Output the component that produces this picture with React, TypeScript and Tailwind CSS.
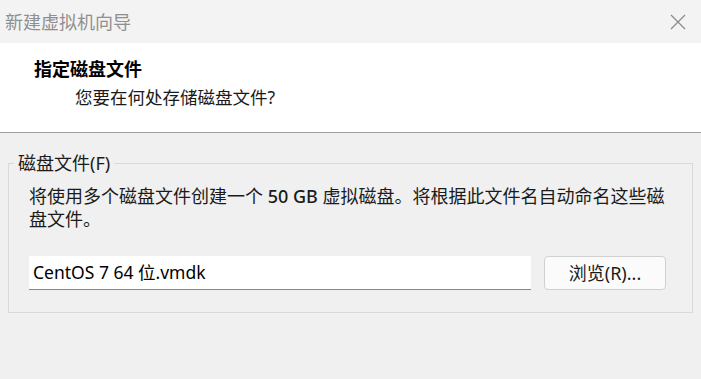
import React from "react";

const font = {
  fontFamily: '"Noto Sans", "Noto Sans CJK SC", sans-serif',
};

export default function App() {
  return (
    <div
      className="flex h-[379px] w-[701px] flex-col overflow-hidden bg-[#f0f0f0] text-[#1b1b1b]"
      style={font}
    >
      {/* 标题栏 */}
      <div className="flex h-[43px] shrink-0 items-center justify-between bg-[#f3f3f3] pl-[5px] pr-[15px]">
        <span className="text-[18px] leading-none text-[#8f8f8f]">新建虚拟机向导</span>
        <svg width="16" height="16" viewBox="0 0 16 16" className="text-[#8a8a8a]">
          <path d="M1 1L15 15M15 1L1 15" stroke="currentColor" strokeWidth="1.2" fill="none" />
        </svg>
      </div>

      {/* 页头 */}
      <div className="flex h-[90px] shrink-0 flex-col border-b border-[#a0a0a0] bg-white pt-[16px]">
        <div className="pl-[34px] text-[18px] font-bold leading-[20px] text-black">指定磁盘文件</div>
        <div className="mt-[8px] pl-[75px] text-[17.5px] leading-[20px] text-[#1a1a1a]">
          您要在何处存储磁盘文件?
        </div>
      </div>

      {/* 内容 */}
      <fieldset className="mx-[8px] mt-[18px] h-[162px] border border-[#d9d9d9] pl-[20px] pr-[20px]">
        <legend className="-ml-[15px] px-[4px] text-[18px] leading-[24px] text-[#1b1b1b]">磁盘文件(F)</legend>
        <p className="mt-[10px] text-[18px] leading-[23px]">
          将使用多个磁盘文件创建一个 <span className="font-medium">50 GB</span> 虚拟磁盘。将根据此文件名自动命名这些磁
          <br />
          盘文件。
        </p>
        <div className="mt-[25px] flex items-center gap-[13px]">
          <div className="flex h-[34px] w-[502px] items-center border-b border-[#868686] bg-white pl-[4px] text-[17.5px] text-black">
            CentOS 7 64 位.vmdk
          </div>
          <button
            type="button"
            className="flex h-[34px] w-[122px] items-center justify-center rounded-[4px] border border-[#d0d0d0] bg-[#fbfbfb] text-[18px] text-[#1b1b1b]"
          >
            浏览(R)...
          </button>
        </div>
      </fieldset>
    </div>
  );
}
